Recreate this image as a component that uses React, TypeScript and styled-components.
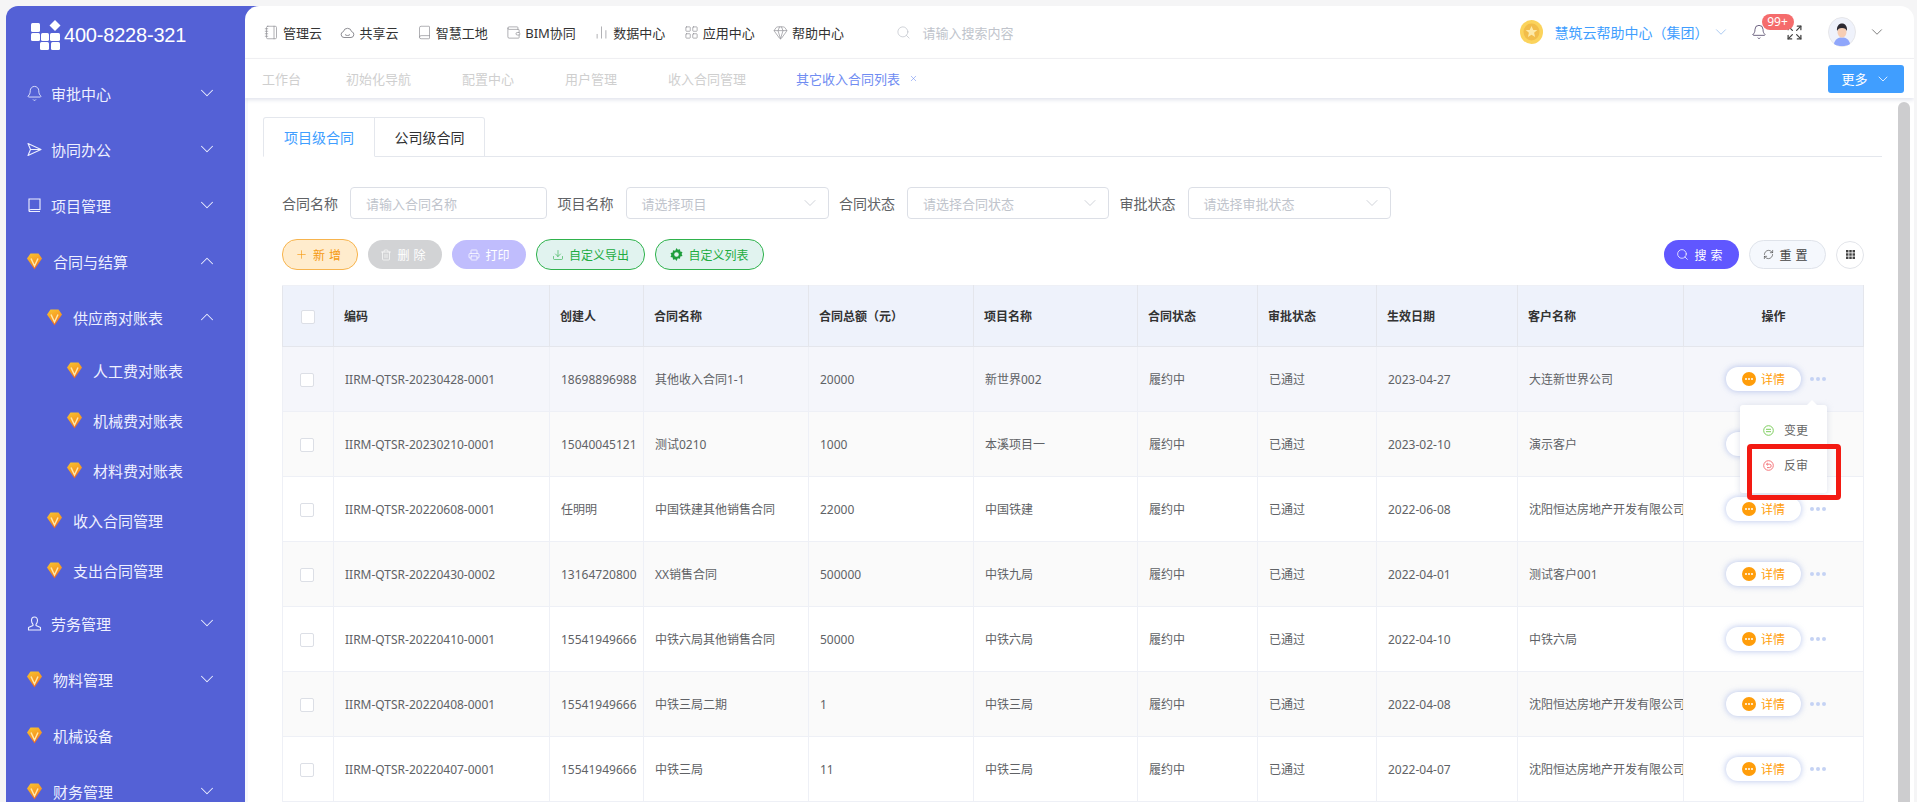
import React from "react";
import styled, { createGlobalStyle, css } from "styled-components";
import {
  Bell, Book, ChevronDown, ChevronUp, Search, Plus, Trash2, Printer, Download, RefreshCw,
  Notebook, Wallet, BarChart2, LayoutGrid, Gem, Expand, X,
} from "lucide-react";

const GlobalStyle = createGlobalStyle`
  html, body { margin: 0; padding: 0; background: #f5f5f6; }
  body { font-family: "Noto Sans", "Noto Sans CJK SC", sans-serif; overflow: hidden; text-spacing-trim: space-all; }
  * { box-sizing: border-box; }
  svg { flex-shrink: 0; }
`;

const Page = styled.div`
  display: flex;
  width: 1917px;
  height: 802px;
  padding: 6px 3px 0 6px;
  overflow: hidden;
  background: #f5f5f6;
`;

const Sidebar = styled.aside`
  position: relative;
  flex: 0 0 239px;
  height: 796px;
  background: #5461d6;
  border-top-left-radius: 12px;
  overflow: visible;
  &::after {
    content: "";
    position: absolute;
    top: 0;
    right: -14px;
    width: 14px;
    height: 14px;
    background: #5461d6;
  }
`;

const Brand = styled.div`
  display: flex;
  align-items: center;
  height: 59px;
  padding-left: 24px;
  gap: 3px;
  color: #fff;
  font-family: "Liberation Sans", sans-serif;
  font-size: 20px;
  letter-spacing: -0.2px;
`;

const MenuRow = styled.div<{ $depth?: number; $sub?: boolean }>`
  display: flex;
  align-items: center;
  height: ${(p) => (p.$sub ? 50 : 56)}px;
  padding-left: ${(p) => 20 + (p.$depth ?? 0) * 20}px;
  color: #eef0ff;
  font-size: 15px;
`;

const MenuIcon = styled.span<{ $gem?: boolean }>`
  display: flex;
  justify-content: center;
  width: 16px;
  margin-right: ${(p) => (p.$gem ? 11 : 9)}px;
`;

const Arrow = styled.span`
  display: flex;
  position: absolute;
  left: 190px;
  margin-top: -1px;
`;

const Main = styled.main`
  position: relative;
  z-index: 1;
  flex: 1;
  display: flex;
  flex-direction: column;
  height: 796px;
  background: #fff;
  border-radius: 14px 14px 0 0;
  overflow: hidden;
`;

const TopBar = styled.header`
  display: flex;
  align-items: center;
  flex: 0 0 53px;
  padding-left: 19px;
  border-bottom: 1px solid #f2f2f4;
  font-size: 13px;
  color: #333;
`;

const NavItem = styled.span`
  display: flex;
  align-items: center;
  gap: 4px;
  margin-right: 18.4px;
  white-space: nowrap;
  svg { color: #8d8d93; }
`;

const TopSearch = styled.span`
  display: flex;
  align-items: center;
  gap: 11px;
  margin-left: 34px;
  color: #c0c4cc;
  svg { color: #c0c4cc; }
`;

const TopRight = styled.div`
  display: flex;
  align-items: center;
  margin-left: auto;
  padding-right: 28px;
`;

const Company = styled.span`
  display: flex;
  align-items: center;
  margin: 0 21px 0 12px;
  gap: 3px;
  color: #409eff;
  font-size: 14px;
  white-space: nowrap;
  svg { color: #8fb8ec; }
`;

const BellWrap = styled.span`
  position: relative;
  display: flex;
  color: #4b3f63;
  margin-right: 19px;
`;

const Badge = styled.span`
  position: absolute;
  left: 11px;
  top: -10px;
  width: 32px;
  height: 16px;
  border-radius: 8px;
  background: #f56c6c;
  color: #fff;
  font-size: 12px;
  line-height: 16px;
  text-align: center;
`;

const AvatarWrap = styled.span`
  display: flex;
  margin: 0 12px 0 25.500px;
`;

const TabBar = styled.nav`
  position: relative;
  z-index: 1;
  display: flex;
  align-items: center;
  flex: 0 0 39px;
  padding: 0 10px 0 17px;
  background: #fff;
  font-size: 13px;
  color: #cfcfcf;
  box-shadow: 0 2px 4px rgba(190, 196, 215, 0.45);
`;

const PageTab = styled.span<{ $active?: boolean }>`
  display: flex;
  align-items: center;
  gap: 9px;
  margin-right: 51px;
  white-space: nowrap;
  &:first-child { margin-right: 45px; }
  ${(p) => p.$active && css`color: #6f8cf2; margin-left: -1px;`}
`;

const MoreButton = styled.button`
  display: flex;
  align-items: center;
  justify-content: center;
  gap: 7px;
  width: 76px;
  height: 28px;
  margin-left: auto;
  border: 0;
  border-radius: 3px;
  background: #409eff;
  color: #fff;
  font: inherit;
  font-size: 13px;
`;

const Body = styled.div`
  flex: 1;
  display: flex;
  min-height: 0;
  padding-top: 4px;
  border-left: 3px solid #f6f8fc;
`;

const Content = styled.section`
  flex: 1;
  min-width: 0;
  padding: 15px 16px 0 15px;
`;

const ScrollTrack = styled.div`
  flex: 0 0 16px;
  padding-right: 4px;
`;

const ScrollThumb = styled.div`
  height: 100%;
  background: #cdcdcf;
  border-radius: 6px 6px 0 0;
`;

const TabStrip = styled.div`
  display: flex;
  height: 40px;
  border-bottom: 1px solid #e4e7ed;
`;

const TypeTab = styled.div<{ $active?: boolean }>`
  display: flex;
  align-items: center;
  justify-content: center;
  height: 40px;
  width: ${(p) => (p.$active ? 112 : 110)}px;
  border: 1px solid #e4e7ed;
  border-left: ${(p) => (p.$active ? "1px solid #e4e7ed" : "0")};
  border-bottom: ${(p) => (p.$active ? "1px solid #fff" : "1px solid #e4e7ed")};
  border-radius: ${(p) => (p.$active ? "3px 0 0 0" : "0 3px 0 0")};
  color: ${(p) => (p.$active ? "#409eff" : "#303133")};
  font-size: 14px;
`;

const Panel = styled.div`
  padding: 0 19px;
`;

const FilterRow = styled.div`
  display: flex;
  align-items: center;
  height: 32px;
  margin-top: 30px;
`;

const FilterLabel = styled.label`
  width: 68px;
  color: #606266;
  font-size: 14px;
  white-space: nowrap;
`;

const Field = styled.div<{ $width: number }>`
  display: flex;
  align-items: center;
  justify-content: space-between;
  width: ${(p) => p.$width}px;
  height: 32px;
  margin-right: 10.5px;
  padding: 0 8px 0 15px;
  border: 1px solid #dcdfe6;
  border-radius: 4px;
  color: #c0c4cc;
  font-size: 13px;
  svg { color: #c0c4cc; }
`;

const ActionRow = styled.div`
  display: flex;
  align-items: center;
  height: 31px;
  margin-top: 20px;
`;

const variants = {
  add: css`width: 76px; background: #ffeccd; border: 1px solid #f7b44e; color: #f59a12;`,
  del: css`width: 74px; background: #d2d3d5; color: #fff;`,
  print: css`width: 74px; background: #c0bdfd; color: #fff;`,
  green: css`width: 109px; background: #e1f3ef; border: 1px solid #2fb24c; color: #21ac3f;`,
  search: css`width: 75px; background: #6057ff; color: #fff;`,
  reset: css`width: 77px; background: #f5f8fd; border: 1px solid #dfe3ea; color: #444;`,
};

const Pill = styled.button<{ $kind: keyof typeof variants; $wide?: boolean }>`
  display: flex;
  align-items: center;
  justify-content: center;
  gap: 5px;
  height: ${(p) => (p.$kind === "add" || p.$kind === "green" ? 31 : 29)}px;
  margin-right: 10px;
  padding: 0;
  border: 0;
  border-radius: 15px;
  font: inherit;
  font-size: 12px;
  letter-spacing: ${(p) => (p.$wide ? 4 : 0)}px;
  ${(p) => variants[p.$kind]}
`;

const RightActions = styled.div`
  display: flex;
  align-items: center;
  margin-left: auto;
  margin-right: -1px;
`;

const GridButton = styled.span`
  display: flex;
  align-items: center;
  justify-content: center;
  width: 28px;
  height: 28px;
  border: 1px solid #e2e4e9;
  border-radius: 50%;
`;

const Table = styled.table`
  width: 1581px;
  margin-top: 15px;
  table-layout: fixed;
  border-collapse: collapse;
  font-size: 12px;
`;

const HeadCell = styled.th<{ $center?: boolean }>`
  height: 61px;
  padding: 0 0 0 ${(p) => (p.$center ? 0 : 10)}px;
  background: #eef2fb;
  border: 1px solid #e4e6ec;
  border-top-color: #eef0f6;
  color: #333;
  font-weight: 700;
  text-align: ${(p) => (p.$center ? "center" : "left")};
  white-space: nowrap;
`;

const Row = styled.tr<{ $tone: string }>`
  background: ${(p) => p.$tone};
`;

const Cell = styled.td`
  height: 65px;
  padding: 0 0 0 11px;
  border: 1px solid #eef0f6;
  color: #606266;
  white-space: nowrap;
  overflow: hidden;
`;

const BoxCell = styled(Cell)`
  padding: 0 3px 0 0;
  text-align: center;
`;

const CheckBox = styled.span`
  display: inline-block;
  width: 14px;
  height: 14px;
  vertical-align: middle;
  background: #fff;
  border: 1px solid #dcdfe6;
  border-radius: 2px;
`;

const OpCell = styled.td`
  position: relative;
  height: 65px;
  padding: 0 0 0 42px;
  border: 1px solid #eef0f6;
`;

const OpInner = styled.div`
  display: flex;
  align-items: center;
  gap: 9px;
`;

const DetailButton = styled.span`
  display: flex;
  align-items: center;
  justify-content: center;
  gap: 5px;
  width: 75px;
  height: 24px;
  background: #fff;
  border-radius: 12px;
  box-shadow: 0 0 6px rgba(140, 162, 225, 0.65);
  color: #ff9d0a;
`;

const DotIcon = styled.span`
  display: flex;
  align-items: center;
  justify-content: center;
  gap: 1px;
  width: 14px;
  height: 14px;
  border-radius: 50%;
  background: #ff9d0a;
  i { width: 2px; height: 2px; border-radius: 50%; background: #fff; }
`;

const MoreDots = styled.span`
  display: flex;
  gap: 2px;
  i { width: 4px; height: 4px; border-radius: 50%; background: #c5d2f4; }
`;

const Popup = styled.div`
  position: absolute;
  z-index: 3;
  left: 56px;
  top: 58px;
  width: 87px;
  height: 88px;
  padding-top: 14px;
  background: #fff;
  border-radius: 3px;
  box-shadow: 0 1px 6px rgba(170, 180, 205, 0.4);
  &::before {
    content: "";
    position: absolute;
    top: -5px;
    left: 66px;
    border: 6px solid transparent;
    border-top: 0;
    border-bottom: 6px solid #fff;
  }
`;

const PopupItem = styled.div`
  display: flex;
  align-items: center;
  gap: 10px;
  height: 22px;
  margin-bottom: 13px;
  padding-left: 23px;
  color: #666;
  font-size: 12px;
`;

const Highlight = styled.div`
  position: absolute;
  left: 7px;
  top: 39px;
  width: 94px;
  height: 56px;
  border: 5px solid #f31a12;
  border-radius: 4px;
`;

const Logo = () => (
  <svg width="31" height="32" viewBox="0 0 31 32" fill="#fff">
    <rect x="1" y="3" width="9" height="9" rx="1.5" />
    <rect x="1" y="13" width="9" height="8" rx="1.5" />
    <rect x="11" y="13" width="8" height="8" rx="1.5" />
    <rect x="20" y="13" width="10" height="8" rx="1.5" />
    <rect x="10" y="22" width="9" height="8" rx="1.5" />
    <rect x="21" y="22" width="9" height="8" rx="1.5" />
    <path d="M25 0l5.5 5.500L25 11l-5.500-5.500z" />
  </svg>
);

const GemIcon = () => (
  <svg width="15" height="17" viewBox="0 0 15 17">
    <defs>
      <linearGradient id="gemFill" x1="0.2" y1="0" x2="0.6" y2="1">
        <stop offset="0" stopColor="#f8c22f" />
        <stop offset="0.55" stopColor="#f79a22" />
        <stop offset="1" stopColor="#ef5f23" />
      </linearGradient>
    </defs>
    <path d="M3.500 0.500h8L15 5.500 7.500 16.500 0 5.500z" fill="url(#gemFill)" />
    <path d="M4 5.500L7.500 13 11 5.500" fill="none" stroke="#ffe9a8" strokeWidth="1.500" />
  </svg>
);

const SendIcon = () => (
  <svg width="15" height="15" viewBox="0 0 15 15" fill="none" stroke="currentColor" strokeWidth="1.100" strokeLinejoin="round">
    <path d="M1 1.500l13 6-13 6 2.500-6zM3.500 7.500H14" />
  </svg>
);

const LaborIcon = () => (
  <svg width="15" height="15" viewBox="0 0 15 15" fill="none" stroke="currentColor" strokeWidth="1.100" strokeLinejoin="round">
    <path d="M7.500 1C5.500 1 4.500 2.500 4.500 4.500c0 2 .8 3 1.500 3.800v1.200L1.500 11.500V14h12v-2.500L9 9.500V8.300c.7-.8 1.500-1.800 1.500-3.800S9.500 1 7.500 1z" />
  </svg>
);

const BookletIcon = () => (
  <svg width="15" height="15" viewBox="0 0 15 15" fill="none" stroke="currentColor" strokeWidth="1.100">
    <path d="M2 1h11v10.500H4a2 2 0 00-2 2zM2 13.500h11" />
  </svg>
);

const CloudRound = () => (
  <svg width="15" height="15" viewBox="0 0 15 15" fill="none" stroke="#8d8d93" strokeWidth="1">
    <path d="M4 12.500a3 3 0 01-.6-5.900 4.200 4.200 0 018.200 0 3 3 0 01-.6 5.900z" />
    <path d="M5 9.500c1 1.300 4 1.300 5 0" />
  </svg>
);

const Coin = () => (
  <svg width="23" height="24" viewBox="0 0 23 24">
    <ellipse cx="11.500" cy="12" rx="11.500" ry="12" fill="#fbd35c" />
    <ellipse cx="11.500" cy="12" rx="8" ry="8.500" fill="#f2bd4a" />
    <path d="M11.500 6l1.800 4h4l-3.200 2.800 1 4.200-3.600-2.300L7.900 17l1-4.200L5.700 10h4z" fill="#fde9a8" />
  </svg>
);

const Avatar = () => (
  <svg width="28" height="30" viewBox="0 0 28 30">
    <ellipse cx="14" cy="15" rx="13.500" ry="14.500" fill="#eff2fb" stroke="#e6e6e9" />
    <path d="M6 27c1-5 4-6.500 8-6.500S21 22 22 27c-2 1.500-5 2-8 2s-6-.5-8-2z" fill="#8fa6fb" />
    <ellipse cx="14" cy="15" rx="4.500" ry="5.500" fill="#f6cdb4" />
    <path d="M9 14c-.5-5 2-7.500 5-7.500s5.500 2.500 5 7.500c-1-2-2-3-5-3s-4 1-5 3z" fill="#2c2a33" />
  </svg>
);

const GridDots = () => (
  <svg width="9" height="9" viewBox="0 0 11 11" fill="#444">
    {[0, 4, 8].flatMap((y) =>
      [0, 4, 8].map((x) => <rect key={`${x}-${y}`} x={x} y={y} width="3" height="3" />)
    )}
  </svg>
);

const ChangeIcon = () => (
  <svg width="11" height="11" viewBox="0 0 11 11" fill="none" stroke="#7ccd5c" strokeWidth="1">
    <circle cx="5.500" cy="5.500" r="4.800" />
    <path d="M3 4.300h5M8 6.700H3" />
  </svg>
);

const RevertIcon = () => (
  <svg width="11" height="11" viewBox="0 0 11 11" fill="none" stroke="#f5757a" strokeWidth="1">
    <circle cx="5.500" cy="5.500" r="4.800" />
    <path d="M3.500 4.200h3a1.700 1.700 0 010 3.400H4M4.800 3L3.500 4.200l1.300 1.200" />
  </svg>
);

const Dots = () => (
  <MoreDots>
    <i />
    <i />
    <i />
  </MoreDots>
);

const thin = { size: 15, strokeWidth: 1.1 };

const navItems = [
  { icon: <Notebook {...thin} />, label: "管理云" },
  { icon: <CloudRound />, label: "共享云" },
  { icon: <Book {...thin} />, label: "智慧工地" },
  { icon: <Wallet {...thin} />, label: "BIM协同" },
  { icon: <BarChart2 {...thin} />, label: "数据中心" },
  { icon: <LayoutGrid {...thin} />, label: "应用中心" },
  { icon: <Gem {...thin} />, label: "帮助中心" },
];

const pageTabs = ["工作台", "初始化导航", "配置中心", "用户管理", "收入合同管理"];

const menu = [
  { label: "审批中心", icon: <Bell size={17} strokeWidth={1.2} />, arrow: "down" },
  { label: "协同办公", icon: <SendIcon />, arrow: "down" },
  { label: "项目管理", icon: <BookletIcon />, arrow: "down" },
  { label: "合同与结算", gem: true, arrow: "up" },
  { label: "供应商对账表", gem: true, arrow: "up", depth: 1 },
  { label: "人工费对账表", gem: true, depth: 2, sub: true },
  { label: "机械费对账表", gem: true, depth: 2, sub: true },
  { label: "材料费对账表", gem: true, depth: 2, sub: true },
  { label: "收入合同管理", gem: true, depth: 1, sub: true },
  { label: "支出合同管理", gem: true, depth: 1, sub: true },
  { label: "劳务管理", icon: <LaborIcon />, arrow: "down" },
  { label: "物料管理", gem: true, arrow: "down" },
  { label: "机械设备", gem: true },
  { label: "财务管理", gem: true, arrow: "down" },
];

const columns = [51, 216, 94, 165, 165, 164, 120, 119, 141, 166, 180];

const ColumnWidth = styled.col<{ $w: number }>`
  width: ${(p) => p.$w}px;
`;

const heads = ["编码", "创建人", "合同名称", "合同总额（元）", "项目名称", "合同状态", "审批状态", "生效日期", "客户名称"];

const rows = [
  ["IIRM-QTSR-20230428-0001", "18698896988", "其他收入合同1-1", "20000", "新世界002", "2023-04-27", "大连新世界公司"],
  ["IIRM-QTSR-20230210-0001", "15040045121", "测试0210", "1000", "本溪项目一", "2023-02-10", "演示客户"],
  ["IIRM-QTSR-20220608-0001", "任明明", "中国铁建其他销售合同", "22000", "中国铁建", "2022-06-08", "沈阳恒达房地产开发有限公司"],
  ["IIRM-QTSR-20220430-0002", "13164720800", "XX销售合同", "500000", "中铁九局", "2022-04-01", "测试客户001"],
  ["IIRM-QTSR-20220410-0001", "15541949666", "中铁六局其他销售合同", "50000", "中铁六局", "2022-04-10", "中铁六局"],
  ["IIRM-QTSR-20220408-0001", "15541949666", "中铁三局二期", "1", "中铁三局", "2022-04-08", "沈阳恒达房地产开发有限公司"],
  ["IIRM-QTSR-20220407-0001", "15541949666", "中铁三局", "11", "中铁三局", "2022-04-07", "沈阳恒达房地产开发有限公司"],
];

const tones = ["#f5f6fb", "#fafafa", "#fff", "#fafafa", "#fff", "#fafafa", "#fff"];

const App = () => {
  return (
    <Page>
      <GlobalStyle />
      <Sidebar>
        <Brand>
          <Logo />
          400-8228-321
        </Brand>
        {menu.map((item) => (
          <MenuRow key={item.label} $depth={item.depth} $sub={item.sub}>
            <MenuIcon $gem={item.gem}>{item.gem ? <GemIcon /> : item.icon}</MenuIcon>
            {item.label}
            {item.arrow && (
              <Arrow>
                {item.arrow === "up" ? <ChevronUp size={22} strokeWidth={1.1} /> : <ChevronDown size={22} strokeWidth={1.1} />}
              </Arrow>
            )}
          </MenuRow>
        ))}
      </Sidebar>
      <Main>
        <TopBar>
          {navItems.map((n) => (
            <NavItem key={n.label}>
              {n.icon}
              {n.label}
            </NavItem>
          ))}
          <TopSearch>
            <Search size={15} strokeWidth={1.2} />
            请输入搜索内容
          </TopSearch>
          <TopRight>
            <Coin />
            <Company>
              慧筑云帮助中心（集团）
              <ChevronDown size={18} strokeWidth={1} />
            </Company>
            <BellWrap>
              <Bell size={16} strokeWidth={1.2} />
              <Badge>99+</Badge>
            </BellWrap>
            <Expand size={17} strokeWidth={1.8} color="#444" />
            <AvatarWrap>
              <Avatar />
            </AvatarWrap>
            <ChevronDown size={18} strokeWidth={1} color="#555" />
          </TopRight>
        </TopBar>
        <TabBar>
          {pageTabs.map((t) => (
            <PageTab key={t}>{t}</PageTab>
          ))}
          <PageTab $active>
            其它收入合同列表
            <X size={9} strokeWidth={1.5} />
          </PageTab>
          <MoreButton>
            更多
            <ChevronDown size={16} strokeWidth={1.2} />
          </MoreButton>
        </TabBar>
        <Body>
          <Content>
            <TabStrip>
              <TypeTab $active>项目级合同</TypeTab>
              <TypeTab>公司级合同</TypeTab>
            </TabStrip>
            <Panel>
              <FilterRow>
                <FilterLabel>合同名称</FilterLabel>
                <Field $width={197}>请输入合同名称</Field>
                <FilterLabel>项目名称</FilterLabel>
                <Field $width={203}>
                  请选择项目
                  <ChevronDown size={20} strokeWidth={0.9} />
                </Field>
                <FilterLabel>合同状态</FilterLabel>
                <Field $width={202}>
                  请选择合同状态
                  <ChevronDown size={20} strokeWidth={0.9} />
                </Field>
                <FilterLabel>审批状态</FilterLabel>
                <Field $width={203}>
                  请选择审批状态
                  <ChevronDown size={20} strokeWidth={0.9} />
                </Field>
              </FilterRow>
              <ActionRow>
                <Pill $kind="add" $wide>
                  <Plus size={13} strokeWidth={1.2} />
                  新增
                </Pill>
                <Pill $kind="del" $wide>
                  <Trash2 size={12} strokeWidth={1.3} />
                  删除
                </Pill>
                <Pill $kind="print">
                  <Printer size={12} strokeWidth={1.5} />
                  打印
                </Pill>
                <Pill $kind="green">
                  <Download size={12} strokeWidth={1.2} />
                  自定义导出
                </Pill>
                <Pill $kind="green">
                  <svg width="13" height="13" viewBox="0 0 13 13">
                    <path d="M6.500 0l1.300 1.800 2.200-.6.300 2.200 2.200.6-.9 2 .9 2-2.200.6-.3 2.200-2.200-.6L6.500 13l-1.300-1.800-2.200.6-.3-2.200-2.200-.6.9-2-.9-2 2.200-.6.3-2.200 2.200.6z" fill="#1e9e3c" />
                    <circle cx="6.500" cy="6.500" r="2.300" fill="#e1f3ef" />
                  </svg>
                  自定义列表
                </Pill>
                <RightActions>
                  <Pill $kind="search" $wide>
                    <Search size={13} strokeWidth={1.4} />
                    搜索
                  </Pill>
                  <Pill $kind="reset" $wide>
                    <RefreshCw size={11} strokeWidth={1.4} />
                    重置
                  </Pill>
                  <GridButton>
                    <GridDots />
                  </GridButton>
                </RightActions>
              </ActionRow>
              <Table>
                <colgroup>
                  {columns.map((w, i) => (
                    <ColumnWidth key={i} $w={w} />
                  ))}
                </colgroup>
                <thead>
                  <tr>
                    <HeadCell $center>
                      <CheckBox />
                    </HeadCell>
                    {heads.map((h) => (
                      <HeadCell key={h}>{h}</HeadCell>
                    ))}
                    <HeadCell $center>操作</HeadCell>
                  </tr>
                </thead>
                <tbody>
                  {rows.map((r, i) => (
                    <Row key={r[0]} $tone={tones[i]}>
                      <BoxCell>
                        <CheckBox />
                      </BoxCell>
                      <Cell>{r[0]}</Cell>
                      <Cell>{r[1]}</Cell>
                      <Cell>{r[2]}</Cell>
                      <Cell>{r[3]}</Cell>
                      <Cell>{r[4]}</Cell>
                      <Cell>履约中</Cell>
                      <Cell>已通过</Cell>
                      <Cell>{r[5]}</Cell>
                      <Cell>{r[6]}</Cell>
                      <OpCell>
                        <OpInner>
                          <DetailButton>
                            <DotIcon>
                              <i />
                              <i />
                              <i />
                            </DotIcon>
                            详情
                          </DetailButton>
                          <Dots />
                        </OpInner>
                        {i === 0 && (
                          <Popup>
                            <PopupItem>
                              <ChangeIcon />
                              变更
                            </PopupItem>
                            <PopupItem>
                              <RevertIcon />
                              反审
                            </PopupItem>
                            <Highlight />
                          </Popup>
                        )}
                      </OpCell>
                    </Row>
                  ))}
                </tbody>
              </Table>
            </Panel>
          </Content>
          <ScrollTrack>
            <ScrollThumb />
          </ScrollTrack>
        </Body>
      </Main>
    </Page>
  );
};

export default App;
